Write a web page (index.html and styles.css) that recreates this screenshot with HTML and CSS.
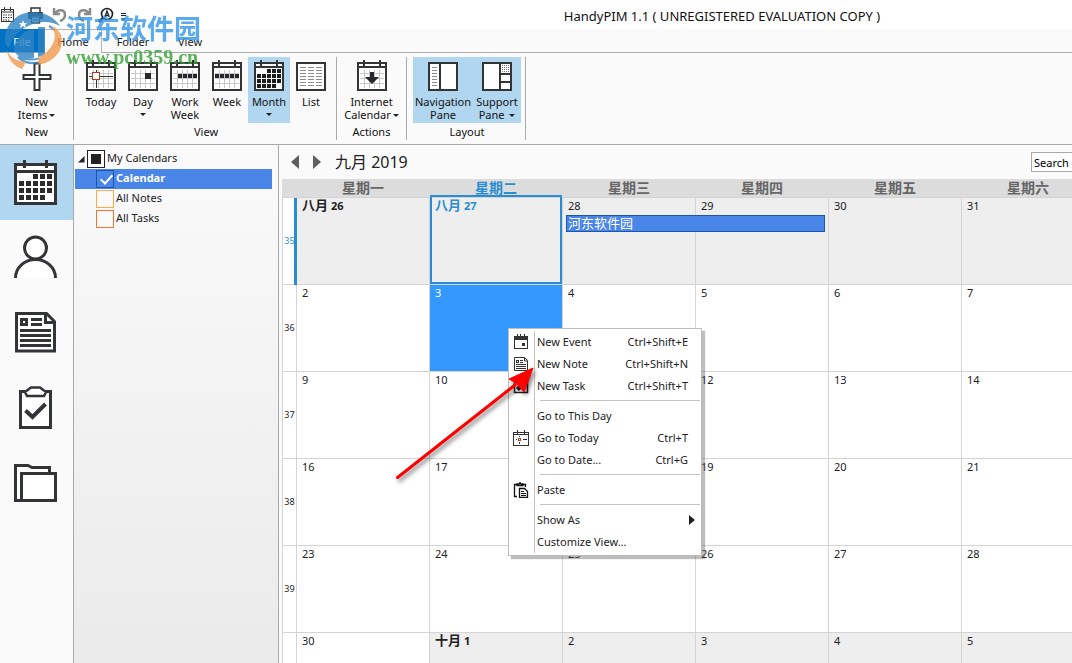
FILE: index.html
```html
<!DOCTYPE html>
<html lang="en">
<head>
<meta charset="utf-8">
<title>HandyPIM 1.1</title>
<link rel="stylesheet" href="styles.css">
</head>
<body>
<svg class="defs" aria-hidden="true">
  <defs>
    <symbol id="cal" viewBox="0 0 30 32">
      <rect x="1" y="3" width="28" height="27" fill="#fff" stroke="#333436" stroke-width="2"/>
      <path d="M1 7h28M7 0v6M23 0v6" stroke="#333436" stroke-width="2" fill="none"/>
    </symbol>
    <symbol id="calgrid" viewBox="0 0 30 32">
      <path d="M7.500 10v18M12.500 10v18M17.500 10v18M22.500 10v18M3 13.500h24M3 18.500h24M3 23.500h24" stroke="#c8c8c8" fill="none"/>
    </symbol>
  </defs>
</svg>
<div class="app">
  <header class="titlebar">
    <div class="quick">
      <button aria-label="Calendar"><svg width="16" height="18" viewBox="0 0 16 18"><rect x="1.500" y="3.500" width="12" height="12" fill="#fff" stroke="#333"/><path d="M1 6h13M4.500 1v4M10.500 1v4" stroke="#333" fill="none"/><path d="M3 9h9M3 11.500h9M3 14h7" stroke="#333" stroke-dasharray="1.500 1"/></svg></button>
      <button aria-label="Print"><svg width="18" height="18" viewBox="0 0 18 18"><path d="M5 6V2h9v4" fill="none" stroke="#333" stroke-width="1.500"/><path d="M2 6h14a1 1 0 0 1 1 1v6h-3v-3H5v3H2z" fill="#333"/><rect x="5.500" y="11" width="8" height="6" fill="#fff" stroke="#333" stroke-width="1.300"/><path d="M7 14h5" stroke="#333"/></svg></button>
      <button aria-label="Undo"><svg width="16" height="18" viewBox="0 0 16 18"><path d="M2 2v6h6M3 7.500C6 3 13 3 13 9c0 3-2 5-5 6" fill="none" stroke="#8b8b8b" stroke-width="2.500"/></svg></button>
      <button aria-label="Redo"><svg width="16" height="18" viewBox="0 0 16 18"><path d="M14 2v6H8M13 7.500C10 3 3 3 3 9c0 3 2 5 5 6" fill="none" stroke="#8b8b8b" stroke-width="2.500"/></svg></button>
      <button aria-label="Find"><svg width="18" height="18" viewBox="0 0 18 18"><circle cx="9" cy="8" r="5.500" fill="#fff" stroke="#222" stroke-width="1.600"/><path d="M5 12l-4 4" stroke="#222" stroke-width="2.500"/><path d="M6.800 11L9 5l2.200 6M7.500 9.500h3" stroke="#222" stroke-width="1.300" fill="none"/></svg></button>
      <button aria-label="Customize toolbar"><svg width="8" height="18" viewBox="0 0 8 18"><path d="M1 7.500h5M1 9.500h5" stroke="#222"/><path d="M1 12h5l-2.500 3z" fill="#222"/></svg></button>
    </div>
    <h1 class="title">HandyPIM 1.1 ( UNREGISTERED EVALUATION COPY )</h1>
  </header>

  <nav class="tabs">
    <button class="tab tab-file">File</button>
    <button class="tab tab-active">Home</button>
    <button class="tab tab-folder">Folder</button>
    <button class="tab tab-view">View</button>
  </nav>

  <section class="ribbon">
    <div class="group group-new">
      <div class="tools">
        <button class="tool"><svg width="30" height="32" viewBox="0 0 30 32"><path d="M12.500 3.500h5v11.500h11v4h-11v11h-5V19h-11v-4h11z" fill="#fff" stroke="#333436" stroke-width="2"/></svg><span>New</span><span>Items<i class="caret"></i></span></button>
      </div>
      <div class="group-name">New</div>
    </div>
    <div class="group group-view">
      <div class="tools">
        <button class="tool"><svg width="30" height="32" viewBox="0 0 30 32"><use href="#cal"/><use href="#calgrid"/><path d="M3 16.500h24M10.500 10v18" stroke="#333"/><rect x="6.500" y="12.500" width="7" height="7" fill="#fff" stroke="#b03a1c"/></svg><span>Today</span></button>
        <button class="tool"><svg width="30" height="32" viewBox="0 0 30 32"><use href="#cal"/><use href="#calgrid"/><rect x="17" y="13" width="6" height="6" fill="#262728"/></svg><span>Day</span><i class="caret caret-row"></i></button>
        <button class="tool"><svg width="30" height="32" viewBox="0 0 30 32"><use href="#cal"/><use href="#calgrid"/><path d="M8 16h19" stroke="#262728" stroke-width="4" stroke-dasharray="4 1"/></svg><span>Work</span><span>Week</span></button>
        <button class="tool"><svg width="30" height="32" viewBox="0 0 30 32"><use href="#cal"/><use href="#calgrid"/><path d="M3 16h24" stroke="#262728" stroke-width="4" stroke-dasharray="4 1"/></svg><span>Week</span></button>
        <button class="tool tool-on"><svg width="30" height="32" viewBox="0 0 30 32"><use href="#cal"/><path d="M13 11h14M3 16h24M3 21h24M3 26h19" stroke="#1c1d1e" stroke-width="4" stroke-dasharray="4 1"/></svg><span>Month</span><i class="caret caret-row"></i></button>
        <button class="tool"><svg width="30" height="32" viewBox="0 0 30 32"><rect x="1" y="3" width="28" height="27" fill="#fff" stroke="#333436" stroke-width="2"/><path d="M4 7.500h22M4 10.500h22M4 13.500h22M4 16.500h22M4 19.500h22M4 22.500h22M4 25.500h22" stroke="#8c8c8c" stroke-dasharray="6 2"/></svg><span>List</span></button>
      </div>
      <div class="group-name">View</div>
    </div>
    <div class="group group-actions">
      <div class="tools">
        <button class="tool"><svg width="30" height="32" viewBox="0 0 30 32"><use href="#cal"/><use href="#calgrid"/><path d="M13 12h4v5h5l-7 7-7-7h5z" fill="#262728"/></svg><span>Internet</span><span>Calendar<i class="caret"></i></span></button>
      </div>
      <div class="group-name">Actions</div>
    </div>
    <div class="group group-layout">
      <div class="tools">
        <button class="tool tool-on tool-nav"><svg width="30" height="32" viewBox="0 0 30 32"><rect x="1" y="3" width="28" height="27" fill="#fff" stroke="#333436" stroke-width="2"/><path d="M12 3v27" stroke="#333436" stroke-width="2"/><path d="M4 7.500h5M4 10.500h5M4 13.500h5M4 16.500h5M4 19.500h5M4 22.500h5M4 25.500h5" stroke="#8c8c8c"/></svg><span>Navigation</span><span>Pane</span></button>
        <button class="tool tool-on tool-sup"><svg width="30" height="32" viewBox="0 0 30 32"><rect x="1" y="3" width="28" height="27" fill="#fff" stroke="#333436" stroke-width="2"/><path d="M18 3v27M18 14h11M18 22h11" stroke="#333436" stroke-width="2"/><path d="M20 5.500h8M20 7.500h8M20 9.500h8M20 11.500h8" stroke="#777" stroke-dasharray="1 1"/></svg><span>Support</span><span>Pane <i class="caret"></i></span></button>
      </div>
      <div class="group-name">Layout</div>
    </div>
  </section>

  <div class="body">
    <nav class="rail">
      <button class="rail-on" aria-label="Calendar"><svg viewBox="0 0 73 75"><rect x="15.500" y="19.500" width="40" height="39" fill="#fff" stroke="#333436" stroke-width="3"/><path d="M15 26.500h41M24.500 15v8M46.500 15v8" stroke="#333436" stroke-width="3"/><path d="M33 31.500h19M19 38.500h33M19 45.500h33M19 52.500h26" stroke="#2b2c2e" stroke-width="5" stroke-dasharray="5 2"/></svg></button>
      <button aria-label="Contacts"><svg viewBox="0 0 73 75"><circle cx="35.500" cy="28" r="11" fill="#fff" stroke="#333436" stroke-width="3"/><path d="M15.500 58a20 18.500 0 0 1 40 0" fill="#fff" stroke="#333436" stroke-width="3"/></svg></button>
      <button aria-label="Notes"><svg viewBox="0 0 73 75"><path d="M16.500 18.500h30l8 8v29.500h-38z" fill="#fff" stroke="#333436" stroke-width="3"/><path d="M45.500 18v9.500h10" fill="none" stroke="#333436" stroke-width="3"/><rect x="21.500" y="24.500" width="5" height="5" fill="none" stroke="#333436" stroke-width="3"/><path d="M31 24.500h11M31 29.500h11M20 35.500h31M20 40.500h31M20 45.500h31M20 50.500h31" stroke="#333436" stroke-width="3"/></svg></button>
      <button aria-label="Tasks"><svg viewBox="0 0 73 75"><rect x="20.500" y="21.500" width="30" height="36" fill="#fff" stroke="#333436" stroke-width="3"/><path d="M25 22l6-4.500h9l6 4.500-2 4H27z" fill="#fff" stroke="#333436" stroke-width="2.500"/><path d="M25.500 40.500l7 6.500 13-13" fill="none" stroke="#333436" stroke-width="4"/></svg></button>
      <button aria-label="Folders"><svg viewBox="0 0 73 75"><path d="M15.500 55.500v-35H28l4 2h17.500v6" fill="#fff" stroke="#333436" stroke-width="3"/><rect x="21.500" y="28.500" width="34" height="27" fill="#fff" stroke="#333436" stroke-width="3"/><path d="M14 55.500h8" stroke="#333436" stroke-width="3"/></svg></button>
    </nav>

    <aside class="tree">
      <label class="node node-root"><svg class="twisty" width="7" height="7" viewBox="0 0 7 7"><path d="M6.500 0v6.500H0z" fill="#222"/></svg><input type="checkbox" class="box box-mixed">My Calendars</label>
      <label class="node node-on"><input type="checkbox" class="box box-cal" checked>Calendar</label>
      <label class="node"><input type="checkbox" class="box box-notes">All Notes</label>
      <label class="node"><input type="checkbox" class="box box-tasks">All Tasks</label>
    </aside>

    <main class="main">
      <div class="bar">
        <button class="step" aria-label="Previous"><svg width="8" height="14" viewBox="0 0 8 14"><path d="M8 0v14L0 7z" fill="#5f5f5f"/></svg></button>
        <button class="step" aria-label="Next"><svg width="8" height="14" viewBox="0 0 8 14"><path d="M0 0v14l8-7z" fill="#5f5f5f"/></svg></button>
        <h2 class="month">九月 2019</h2>
        <input class="search" type="text" placeholder="Search" aria-label="Search">
      </div>
      <table class="grid">
        <thead>
          <tr><th class="wk"></th><th>星期一</th><th class="today-head">星期二</th><th>星期三</th><th>星期四</th><th>星期五</th><th>星期六</th></tr>
        </thead>
        <tbody>
          <tr><th class="wk wk-now">35</th><td class="off"><b><em>八月</em> 26</b></td><td class="off today"><b><em>八月</em> 27</b></td><td class="off has-event">28<div class="event">河东软件园</div></td><td class="off">29</td><td class="off">30</td><td class="off">31</td></tr>
          <tr><th class="wk">36</th><td>2</td><td class="picked">3</td><td>4</td><td>5</td><td>6</td><td>7</td></tr>
          <tr><th class="wk">37</th><td>9</td><td>10</td><td>11</td><td>12</td><td>13</td><td>14</td></tr>
          <tr><th class="wk">38</th><td>16</td><td>17</td><td>18</td><td>19</td><td>20</td><td>21</td></tr>
          <tr><th class="wk">39</th><td>23</td><td>24</td><td>25</td><td>26</td><td>27</td><td>28</td></tr>
          <tr><th class="wk"></th><td>30</td><td class="off"><b><em>十月</em> 1</b></td><td class="off">2</td><td class="off">3</td><td class="off">4</td><td class="off">5</td></tr>
        </tbody>
      </table>
    </main>
  </div>

  <div class="menu">
    <button class="item"><svg width="16" height="16" viewBox="0 0 16 16"><rect x="1.500" y="2.500" width="13" height="12" fill="#fff" stroke="#333"/><path d="M1 4h14" stroke="#333" stroke-width="4"/><path d="M4.500 0v3M7.500 0v3M11.500 0v3" stroke="#333"/><rect x="9" y="9" width="3" height="3" fill="#333"/></svg><span>New Event</span><kbd>Ctrl+Shift+E</kbd></button>
    <button class="item"><svg width="16" height="16" viewBox="0 0 16 16"><path d="M1.500 1.500h10l3 3v10h-13z" fill="#fff" stroke="#333"/><path d="M11.500 1v4h3M7 4.500h3M7 6.500h3M3 8.500h10M3 10.500h10M3 12.500h10" stroke="#333" fill="none"/><rect x="3.500" y="4.500" width="2" height="2" fill="none" stroke="#333"/></svg><span>New Note</span><kbd>Ctrl+Shift+N</kbd></button>
    <button class="item"><svg width="16" height="16" viewBox="0 0 16 16"><rect x="1.500" y="1.500" width="13" height="13" fill="#fff" stroke="#222" stroke-width="1.500"/><path d="M4 9l2 2 7-7" fill="none" stroke="#222" stroke-width="3"/></svg><span>New Task</span><kbd>Ctrl+Shift+T</kbd></button>
    <hr>
    <button class="item"><span>Go to This Day</span></button>
    <button class="item"><svg width="16" height="16" viewBox="0 0 16 16"><rect x=".500" y="2.500" width="15" height="13" fill="#fff" stroke="#333"/><path d="M0 4.500h16M4.500 0v4M11.500 0v4" stroke="#333"/><path d="M3 9.500h1M10 9.500h4M6.500 6v1M6.500 12v2" stroke="#333"/><rect x="5.500" y="8.500" width="2" height="2" fill="none" stroke="#b8401f"/></svg><span>Go to Today</span><kbd>Ctrl+T</kbd></button>
    <button class="item"><span>Go to Date...</span><kbd>Ctrl+G</kbd></button>
    <hr>
    <button class="item"><svg width="16" height="16" viewBox="0 0 16 16"><path d="M4 14.500H1.500v-12H4M10 2.500h2.500V5M4 3.500V2h2l1-1.500L8 2h2v1.500z" fill="none" stroke="#111" stroke-width="1.300"/><path d="M6.500 6.500h5l3 3v6h-8z" fill="#fff" stroke="#111" stroke-width="1.300"/><path d="M8 9.500h3M8 11.500h5M8 13.500h5" stroke="#111"/></svg><span>Paste</span></button>
    <hr>
    <button class="item item-more"><span>Show As</span><svg width="6" height="10" viewBox="0 0 6 10"><path d="M0 0v10l6-5z" fill="#222"/></svg></button>
    <button class="item"><span>Customize View...</span></button>
  </div>

  <svg class="pointer" width="150" height="130" viewBox="0 0 150 130" aria-hidden="true">
    <path d="M7.500 112.500L125 20" stroke="#f00" stroke-width="3" stroke-linecap="round"/>
    <path d="M143 3L119 14l7 4 8 9z" fill="#f00" stroke="#f00"/>
  </svg>

  <div class="mark">
    <svg width="60" height="60" viewBox="0 0 60 60" aria-hidden="true">
      <path d="M0 28C0 11 13 0 28 0c12 0 22 6 27 14-7-4-15-5-23-3C19 14 8 22 4 36c-2-1-4-4-4-8z" fill="#2f83c4"/>
      <path d="M9 34c2-7 8-13 15-16h5v28l-7 1c-8-1-14-6-13-13z" fill="#2f83c4"/>
      <path d="M33 15h7v28l-7 2z" fill="#2f83c4"/>
      <path d="M44 14c14 7 9 24-4 30-9 5-19 4-27 1 6 7 19 8 29 3" fill="none" stroke="#2f83c4" stroke-width="2"/>
      <path d="M46 14c8 8 3 24-12 31l-1 8c16-3 27-15 23-30-2-4-5-8-10-9z" fill="#f29a4c"/>
      <path d="M2 38c2 6 8 11 19 12l-4 7C9 54 3 48 2 38z" fill="#f29a4c"/>
      <path d="M18 8l1 3h3l-2 2 1 3-3-2-3 2 1-3-2-2h3z" fill="#fff"/>
    </svg>
    <div class="mark-text"><strong>河东软件园</strong><span>www.pc0359.cn</span></div>
  </div>
</div>
</body>
</html>
```

FILE: styles.css
```css
* { box-sizing: border-box; }
body {
  margin: 0;
  font: 11px/14px "Noto Sans", "Noto Sans CJK SC", sans-serif;
  color: #222;
  background: #fafafa;
}
button { border: 0; padding: 0; background: none; font: inherit; color: inherit; }
h1, h2 { margin: 0; font-weight: 400; }
svg { display: block; flex: none; }
.defs { position: absolute; width: 0; height: 0; }
.app { position: relative; display: flex; flex-direction: column; height: 100vh; overflow: hidden; }

.titlebar { display: flex; height: 29px; flex: none; background: #fff; }
.quick { display: flex; align-items: center; gap: 8px; width: 372px; }
.quick button:nth-child(2) { margin-left: 2px; }
.quick button:nth-child(n+5) { margin-right: -4px; }
.quick button:nth-child(5) { margin-left: -2px; }
.title { flex: 1; text-align: center; font-size: 13px; line-height: 32px; color: #111; }

.tabs { display: flex; flex: none; height: 24px; border-bottom: 1px solid #a9a9a9; }
.tab { line-height: 26px; height: 23px; }
.tab-file { width: 44px; background: #0072c6; color: #fff; }
.tab-active { width: 58px; height: 24px; line-height: 24px; background: #fafafa; border: 1px solid #b5b5b5; border-bottom: 0; }
.tab-folder { width: 62px; }
.tab-view { width: 52px; }

.ribbon { display: flex; flex: none; height: 92px; padding-top: 4px; border-bottom: 1px solid #a9a9a9; color: #111; }
.group { display: flex; flex-direction: column; height: 83px; border-right: 1px solid #a9a9a9; }
.tools { display: flex; justify-content: center; height: 66px; }
.group-name { padding-top: 2px; text-align: center; }
.group-new { width: 74px; }
.group-view { width: 263px; padding: 0 4px 0 6px; }
.group-actions { width: 70px; }
.group-layout { width: 119px; padding: 0 4px 0 6px; }
.tool { display: flex; flex-direction: column; align-items: center; width: 42px; height: 66px; padding-top: 3px; line-height: 13px; white-space: nowrap; }
.tool svg { margin-bottom: 3px; }
.tool-on { background: #b1d6f0; }
.tool-nav { width: 60px; }
.tool-sup { width: 48px; }
.group-new .tool, .group-actions .tool { width: 60px; }
.caret { display: inline-block; width: 0; margin-left: 2px; vertical-align: 2px; border: 3px solid transparent; border-top-color: #222; border-bottom: 0; }
.caret-row { margin: 5px 0 0; }

.body { display: flex; flex: 1; min-height: 0; }
.rail { display: flex; flex-direction: column; width: 74px; flex: none; border-right: 1px solid #a9a9a9; }
.rail button { height: 75px; flex: none; }
.rail svg { width: 73px; height: 75px; }
.rail .rail-on { background: #b1d6f0; }

.tree { width: 205px; flex: none; padding: 4px 6px 0 1px; border-right: 1px solid #a9a9a9; background: linear-gradient(#fafafa, #eaeaea); }
.node { display: flex; gap: 2px; height: 20px; padding-left: 21px; line-height: 18px; }
.node-root { padding-left: 3px; }
.twisty { margin: 7px 0 0; }
.node-on { background: #4a86e8; color: #fff; font-weight: 700; }
.box { appearance: none; flex: none; width: 18px; height: 18px; margin: 1px 0 0; border: 1px solid #222; background: #fafafa; }
.box-mixed { background: linear-gradient(#222, #222) center / 10px 10px no-repeat #fff; }
.box-cal { border-color: #1c55b0; background: #4a86e8; }
.box-cal::after { content: ""; display: block; width: 5px; height: 10px; margin: 1px 0 0 6px; border: solid #fff; border-width: 0 2px 2px 0; transform: rotate(42deg); }
.box-notes { border-color: #ffab40; }
.box-tasks { border-color: #ff7033; }

.main { flex: 1; min-width: 0; padding-left: 3px; overflow: hidden; }
.bar { display: flex; align-items: center; gap: 14px; height: 34px; padding-left: 9px; }
.month { font-size: 16px; line-height: 34px; color: #222; }
.search { width: 41px; height: 20px; margin-left: auto; padding: 0 2px; border: 1px solid #a9a9a9; border-right: 0; background: #fff; font: inherit; }
.search::placeholder { color: #000; opacity: 1; }

.grid { width: calc(100% + 22px); table-layout: fixed; border-spacing: 0; border-collapse: separate; }
.grid th, .grid td { padding: 0; border-left: 1px solid #d4d4d4; border-bottom: 1px solid #d4d4d4; }
.grid thead th { height: 19px; padding: 0; border-left-color: #dcdcdc; background: #dcdcdc; font-size: 14px; line-height: 18px; color: #666; }
.grid thead .today-head { color: #2a8dd4; }
.grid .wk { width: 14px; }
.grid tbody .wk { background: #fff; font-size: 9px; font-weight: 400; color: #222; }
.grid tbody .wk-now { position: relative; z-index: 1; color: #2a8dd4; }
.wk-now::after { content: ""; position: absolute; top: 0; right: -1px; width: 3px; height: 87px; background: #2a8dd4; }
.grid td { position: relative; height: 87px; padding-left: 5px; vertical-align: top; line-height: 16px; background: #fff; }
.grid td b { display: block; height: 16px; }
.grid td em { font-size: 13px; font-style: normal; line-height: 14px; }
.grid td.off { background: #eee; }
.grid td.picked { background: #3399ff; color: #fff; }
.grid td.today { color: #2a8dd4; }
.today::after { content: ""; position: absolute; inset: -3px 0 0 0; border: 2px solid #2a8dd4; }
.grid td.has-event { z-index: 1; }
.event { position: absolute; left: 3px; top: 17px; width: calc(200% - 5px); height: 17px; padding-left: 1px; border: 1px solid #1c55b0; background: #4a86e8; color: #fff; font-size: 13px; line-height: 14px; }

.menu { position: absolute; z-index: 2; left: 508px; top: 328px; width: 194px; padding: 2px 1px; border: 1px solid #bdbdbd; background: linear-gradient(#c4c4c4, #c4c4c4) 25px 2px / 1px 222px no-repeat #fff; box-shadow: 3px 3px 1px rgba(90, 90, 90, .4); }
.item { display: grid; grid-template-columns: 27px 1fr auto; align-items: center; width: 100%; height: 22px; padding-right: 12px; text-align: left; }
.item svg { margin-left: 3px; }
.item span { grid-column: 2; }
.item kbd { font: inherit; }
.item-more { padding-right: 5px; }
.menu hr { height: 1px; margin: 3px 0 4px 30px; border: 0; background: #c4c4c4; }

.pointer { position: absolute; z-index: 3; left: 390px; top: 365px; filter: drop-shadow(2px 3px 2px rgba(0, 0, 0, .5)); }

.mark { position: absolute; z-index: 3; left: 5px; top: 12px; display: flex; opacity: .8; pointer-events: none; }
.mark-text { display: flex; flex-direction: column; margin-left: 1px; white-space: nowrap; }
.mark strong { font-size: 27px; line-height: 34px; color: #3396ea; }
.mark span { font: 700 20px/22px "Liberation Serif", serif; color: #35a035; }
```
